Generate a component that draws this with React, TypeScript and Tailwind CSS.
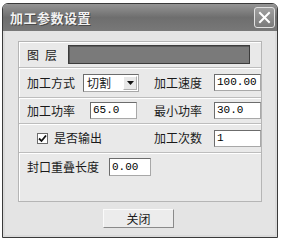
import React from "react";

const cjk = { fontFamily: '"Noto Sans CJK SC", "Noto Sans", sans-serif' };
const mono = { fontFamily: '"Liberation Mono", "DejaVu Sans Mono", monospace' };

const Field = ({ value, w }: { value: string; w: string }) => (
  <div
    className={`${w} h-[17px] bg-white border border-[#a8a8a8] border-t-[#6c6c6c] border-l-[#6c6c6c] flex items-center pl-[2px] text-[11px] text-black leading-none overflow-hidden`}
    style={mono}
  >
    {value}
  </div>
);

const Row = ({ children, h }: { children: React.ReactNode; h: string }) => (
  <div className={`${h} flex items-center border-b border-[#bdbdbd] shadow-[0_1px_0_#ffffff]`}>
    {children}
  </div>
);

const RightPart = ({ label, value }: { label: string; value: string }) => (
  <div className="flex items-center">
    <span className="w-[53px] text-right">{label}</span>
    <div className="ml-[12px]">
      <Field value={value} w="w-[47px]" />
    </div>
  </div>
);

export default function App() {
  return (
    <div className="w-[284px] h-[242px] bg-white pl-[2px] pt-[3px]" style={cjk}>
      <div className="w-[276px] h-[235px] flex flex-col border border-[#3a3a3a] rounded-t-[6px] overflow-hidden bg-[#e4e4e4]">
        {/* title bar */}
        <div className="h-[27px] flex items-center justify-between pl-[7px] pr-[2px] bg-gradient-to-b from-[#959595] via-[#6e6e6e] to-[#787878]">
          <span className="text-[13px] font-bold text-[#f2f2f2] tracking-[0.5px] [text-shadow:1px_1px_0_#4a4a4a]">
            加工参数设置
          </span>
          <div className="w-[21px] h-[21px] rounded-[3px] border border-[#e2e2e2] bg-gradient-to-b from-[#a0a0a0] to-[#7a7a7a] flex items-center justify-center">
            <svg width="13" height="13" viewBox="0 0 13 13">
              <path d="M2 2 L11 11 M11 2 L2 11" stroke="#ffffff" strokeWidth="2" strokeLinecap="square" />
            </svg>
          </div>
        </div>

        <div className="flex-1 flex flex-col border-x-[2px] border-b-[2px] border-[#dadada] px-[13px] pt-[10px] text-[12px] text-[#1a1a1a]">
          {/* group box */}
          <div className="h-[161px] flex flex-col border border-[#b5b5b5] shadow-[inset_1px_1px_0_#ffffff] bg-[#e9e9e9]">
            <Row h="h-[26px]">
              <span className="pl-[8px] w-[49px] tracking-[6px]">图层</span>
              <div className="w-[182px] h-[19px] bg-[#7a7a7a] border border-[#3c3c3c] shadow-[inset_1px_1px_0_#5a5a5a]" />
            </Row>
            <Row h="h-[30px]">
              <div className="w-[130px] flex items-center pl-[8px]">
                <span>加工方式</span>
                <div className="ml-[8px] w-[56px] h-[18px] bg-white border border-[#a8a8a8] border-t-[#6c6c6c] border-l-[#6c6c6c] flex items-center justify-between pl-[3px] pr-[1px]">
                  <span>切割</span>
                  <div className="w-[14px] h-[14px] bg-[#e8e8e8] border border-[#b0b0b0] border-t-white border-l-white flex items-center justify-center">
                    <svg width="7" height="4" viewBox="0 0 7 4">
                      <path d="M0 0 L7 0 L3.5 4 Z" fill="#111" />
                    </svg>
                  </div>
                </div>
              </div>
              <RightPart label="加工速度" value="100.00" />
            </Row>
            <Row h="h-[26px]">
              <div className="w-[130px] flex items-center pl-[8px]">
                <span>加工功率</span>
                <div className="ml-[15px]">
                  <Field value="65.0" w="w-[47px]" />
                </div>
              </div>
              <RightPart label="最小功率" value="30.0" />
            </Row>
            <Row h="h-[29px]">
              <div className="w-[130px] flex items-center pl-[18px]">
                <div className="w-[11px] h-[11px] bg-white border border-[#6c6c6c] flex items-center justify-center">
                  <svg width="9" height="9" viewBox="0 0 9 9">
                    <path d="M1 4.5 L3.5 7 L8 1.5" stroke="#111" strokeWidth="1.8" fill="none" />
                  </svg>
                </div>
                <span className="ml-[6px]">是否输出</span>
              </div>
              <RightPart label="加工次数" value="1" />
            </Row>
            <div className="flex-1 flex items-start pt-[5px] pl-[8px]">
              <span className="leading-[18px]">封口重叠长度</span>
              <div className="ml-[10px]">
                <Field value="0.00" w="w-[42px] !h-[18px]" />
              </div>
            </div>
          </div>

          {/* close button */}
          <div className="flex justify-center pt-[7px]">
            <button className="ml-[-3px] w-[71px] h-[19px] bg-[#ececec] border border-[#8a8a8a] border-t-[#fafafa] border-l-[#fafafa] text-[12px] text-[#1a1a1a] leading-none">
              关闭
            </button>
          </div>
        </div>
      </div>
    </div>
  );
}
